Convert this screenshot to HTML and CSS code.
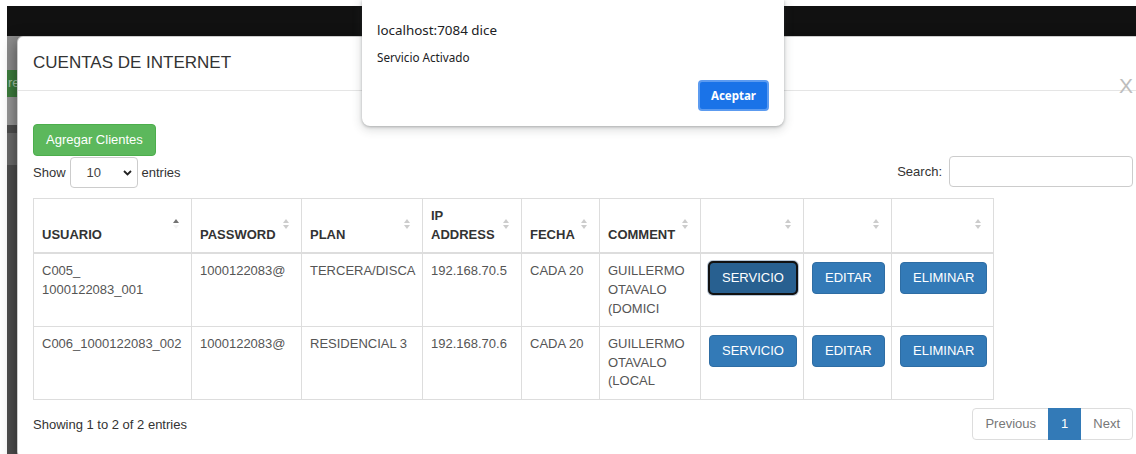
FILE: index.html
```html
<!DOCTYPE html>
<html lang="es">
<head>
<meta charset="utf-8">
<title>Cuentas de Internet</title>
<link rel="stylesheet" href="styles.css">
</head>
<body>
<div class="site">
  <nav class="navbar"></nav>
  <main class="site-main">
    <div class="dim-top"></div>
    <div class="dim-btn"><span>re</span></div>
    <div class="dim-gap"></div>
    <div class="dim-band"></div>
  </main>
</div>

<div class="modal">
  <div class="modal-header">
    <h4 class="modal-title">CUENTAS DE INTERNET</h4>
    <button class="modal-close" type="button">X</button>
  </div>
  <div class="modal-body">
    <div class="toolbar">
      <button class="btn btn-success" type="button">Agregar Clientes</button>
    </div>
    <div class="dt-top">
      <label class="dt-length">Show
        <span class="select"><span>10</span><svg width="9" height="6" viewBox="0 0 9 6"><path d="M1 1l3.5 3.5L8 1" fill="none" stroke="#222" stroke-width="1.8"/></svg></span>
        entries</label>
      <label class="dt-search">Search:<input type="search"></label>
    </div>
    <table class="dt-table">
      <colgroup>
        <col class="w-user"><col class="w-pass"><col class="w-plan"><col class="w-ip"><col class="w-date"><col class="w-comment"><col class="w-act1"><col class="w-act2"><col class="w-act3">
      </colgroup>
      <thead>
        <tr>
          <th class="sort sort-asc">USUARIO</th>
          <th class="sort">PASSWORD</th>
          <th class="sort">PLAN</th>
          <th class="sort">IP ADDRESS</th>
          <th class="sort">FECHA</th>
          <th class="sort">COMMENT</th>
          <th class="sort"></th>
          <th class="sort"></th>
          <th class="sort"></th>
        </tr>
      </thead>
      <tbody>
        <tr>
          <td>C005_ 1000122083_001</td>
          <td>1000122083@</td>
          <td class="nowrap">TERCERA/DISCA</td>
          <td>192.168.70.5</td>
          <td>CADA 20</td>
          <td>GUILLERMO OTAVALO (DOMICI</td>
          <td><button class="btn btn-primary btn-focus" type="button">SERVICIO</button></td>
          <td><button class="btn btn-primary" type="button">EDITAR</button></td>
          <td><button class="btn btn-primary" type="button">ELIMINAR</button></td>
        </tr>
        <tr>
          <td>C006_1000122083_002</td>
          <td>1000122083@</td>
          <td class="nowrap">RESIDENCIAL 3</td>
          <td>192.168.70.6</td>
          <td>CADA 20</td>
          <td>GUILLERMO OTAVALO (LOCAL</td>
          <td><button class="btn btn-primary" type="button">SERVICIO</button></td>
          <td><button class="btn btn-primary" type="button">EDITAR</button></td>
          <td><button class="btn btn-primary" type="button">ELIMINAR</button></td>
        </tr>
      </tbody>
    </table>
    <div class="dt-bottom">
      <div class="dt-info">Showing 1 to 2 of 2 entries</div>
      <ul class="pagination">
        <li><a class="page first">Previous</a></li>
        <li><a class="page active">1</a></li>
        <li><a class="page last">Next</a></li>
      </ul>
    </div>
  </div>
</div>

<div class="js-dialog" role="alertdialog">
  <div class="js-dialog-title">localhost:7084 dice</div>
  <div class="js-dialog-msg">Servicio Activado</div>
  <div class="js-dialog-actions">
    <button class="js-dialog-ok" type="button">Aceptar</button>
  </div>
</div>
</body>
</html>
```

FILE: styles.css
```css
* { box-sizing: border-box; }

html, body {
  margin: 0;
  height: 100%;
  overflow: hidden;
}

body {
  font-family: "Liberation Sans", Arial, sans-serif;
  font-size: 13px;
  line-height: 1.42857;
  color: #333;
  background: #fff;
}

/* page behind the dimmed backdrop */
.site {
  margin-left: 7px;
  padding-top: 6px;
  height: 100%;
  display: flex;
  flex-direction: column;
}

.navbar {
  flex: none;
  height: 30px;
  background: #111;
}

.site-main {
  flex: 1;
  display: flex;
  flex-direction: column;
  background: #4e4e4e;
}

.dim-top { height: 34px; background: #8c8c8c; }

.dim-btn {
  height: 27px;
  display: flex;
  align-items: center;
  padding-left: 1px;
  white-space: nowrap;
  background: #3d7d3d;
  color: #a9c6a9;
}

.dim-gap { height: 28px; background: #979797; }
.dim-band { height: 32px; margin-top: 8px; background: #6b6b6b; }

/* modal */
.modal {
  position: absolute;
  left: 17px;
  top: 36px;
  width: 1132px;
  background: #fff;
  border: 1px solid rgba(0, 0, 0, .2);
  border-radius: 6px;
  box-shadow: 0 5px 15px rgba(0, 0, 0, .5);
}

.modal-header {
  padding: 14px 15px 15px;
  border-bottom: 1px solid #e5e5e5;
}

.modal-title {
  margin: 0;
  font-size: 17px;
  font-weight: normal;
  line-height: 1.42857;
  color: #333;
}

.modal-close {
  float: right;
  margin: 0;
  padding: 0;
  border: 0;
  background: none;
  font: 21px/1 "Liberation Sans", Arial, sans-serif;
  color: #bdbdbd;
}

.modal-body { padding: 15px; }

.toolbar { padding-top: 18px; }

/* buttons */
.btn {
  display: inline-block;
  margin: 0;
  padding: 6px 12px;
  font-family: inherit;
  font-size: 13px;
  line-height: 18px;
  color: #fff;
  border: 1px solid transparent;
  border-radius: 4px;
  white-space: nowrap;
}

.btn-success { background: #5cb85c; border-color: #4cae4c; }
.btn-primary { background: #337ab7; border-color: #2e6da4; }

.btn-focus {
  background: #286090;
  border-color: #122b40;
  outline: 2px solid #111;
  outline-offset: -1px;
  box-shadow: 0 0 0 2px #b9c7d6;
}

/* datatable controls */
.dt-top {
  display: flex;
  justify-content: space-between;
  align-items: flex-start;
}

.dt-length {
  display: flex;
  align-items: center;
  gap: 4px;
  margin-top: 1px;
}

.select {
  display: flex;
  align-items: center;
  justify-content: space-between;
  width: 68px;
  height: 31px;
  padding: 0 5px 0 16px;
  border: 1px solid #ccc;
  border-radius: 4px;
  background: #fff;
  color: #444;
}

.dt-search {
  display: flex;
  align-items: center;
}

.dt-search input {
  margin: 0 0 0 7px;
  width: 184px;
  height: 31px;
  border: 1px solid #ccc;
  border-radius: 4px;
  background: #fff;
}

/* table */
.dt-table {
  width: 961px;
  table-layout: fixed;
  border-collapse: collapse;
  margin: 10px 0 6px;
  border: 1px solid #ddd;
}

.w-user { width: 158px; }
.w-pass { width: 110px; }
.w-plan { width: 121px; }
.w-ip { width: 99px; }
.w-date { width: 78px; }
.w-comment { width: 101px; }
.w-act1 { width: 103px; }
.w-act2 { width: 88px; }
.w-act3 { width: 102px; }

.dt-table th {
  position: relative;
  padding: 8px 22px 8px 8px;
  text-align: left;
  vertical-align: bottom;
  font-weight: bold;
  color: #333;
  border: 1px solid #ddd;
  border-bottom-width: 2px;
}

.dt-table td {
  padding: 8px;
  vertical-align: top;
  color: #555;
  border: 1px solid #ddd;
}

.nowrap { white-space: nowrap; }

/* sort indicators */
.sort::before,
.sort::after {
  content: "";
  position: absolute;
  right: 12px;
  width: 0;
  height: 0;
  border-left: 3px solid transparent;
  border-right: 3px solid transparent;
  opacity: .2;
}

.sort::before {
  bottom: calc(50% + 3px);
  border-bottom: 4px solid #000;
}

.sort::after {
  top: calc(50% - 1px);
  border-top: 4px solid #000;
}

.sort-asc::before { opacity: .55; }
.sort-asc::after { opacity: .05; }

/* footer */
.dt-bottom {
  display: flex;
  justify-content: space-between;
  align-items: flex-start;
}

.dt-info { padding-top: 10px; color: #333; }

.pagination {
  display: flex;
  margin: 2px 0;
  padding: 0;
  list-style: none;
}

.page {
  display: block;
  margin-left: -1px;
  padding: 6px 12px;
  line-height: 18.57px;
  color: #777;
  background: #fff;
  border: 1px solid #ddd;
}

.page.first { margin-left: 0; border-radius: 4px 0 0 4px; }
.page.last { border-radius: 0 4px 4px 0; }

.page.active {
  position: relative;
  color: #fff;
  background: #337ab7;
  border-color: #337ab7;
}

/* browser alert dialog */
.js-dialog {
  position: absolute;
  left: 362px;
  top: 0;
  width: 422px;
  height: 126px;
  display: flex;
  flex-direction: column;
  padding: 20px 15px 15px;
  background: #fff;
  border-radius: 0 0 8px 8px;
  box-shadow: 0 1px 3px rgba(60, 64, 67, .35), 0 3px 8px 2px rgba(60, 64, 67, .15);
  font-family: "Noto Sans", "Open Sans", sans-serif;
  color: #202124;
}

.js-dialog-title {
  font-size: 13.4px;
  line-height: 20px;
}

.js-dialog-msg {
  margin-top: 8px;
  font-size: 11.7px;
  line-height: 18px;
  color: #202124;
}

.js-dialog-actions {
  margin-top: auto;
  display: flex;
  justify-content: flex-end;
}

.js-dialog-ok {
  width: 71px;
  height: 31px;
  margin: 0;
  padding: 0;
  font-family: "Noto Sans", "Open Sans", sans-serif;
  font-size: 11.5px;
  font-weight: bold;
  color: #fff;
  background: #1a73e8;
  border: 2px solid #5c9bf0;
  border-radius: 4px;
}
```
